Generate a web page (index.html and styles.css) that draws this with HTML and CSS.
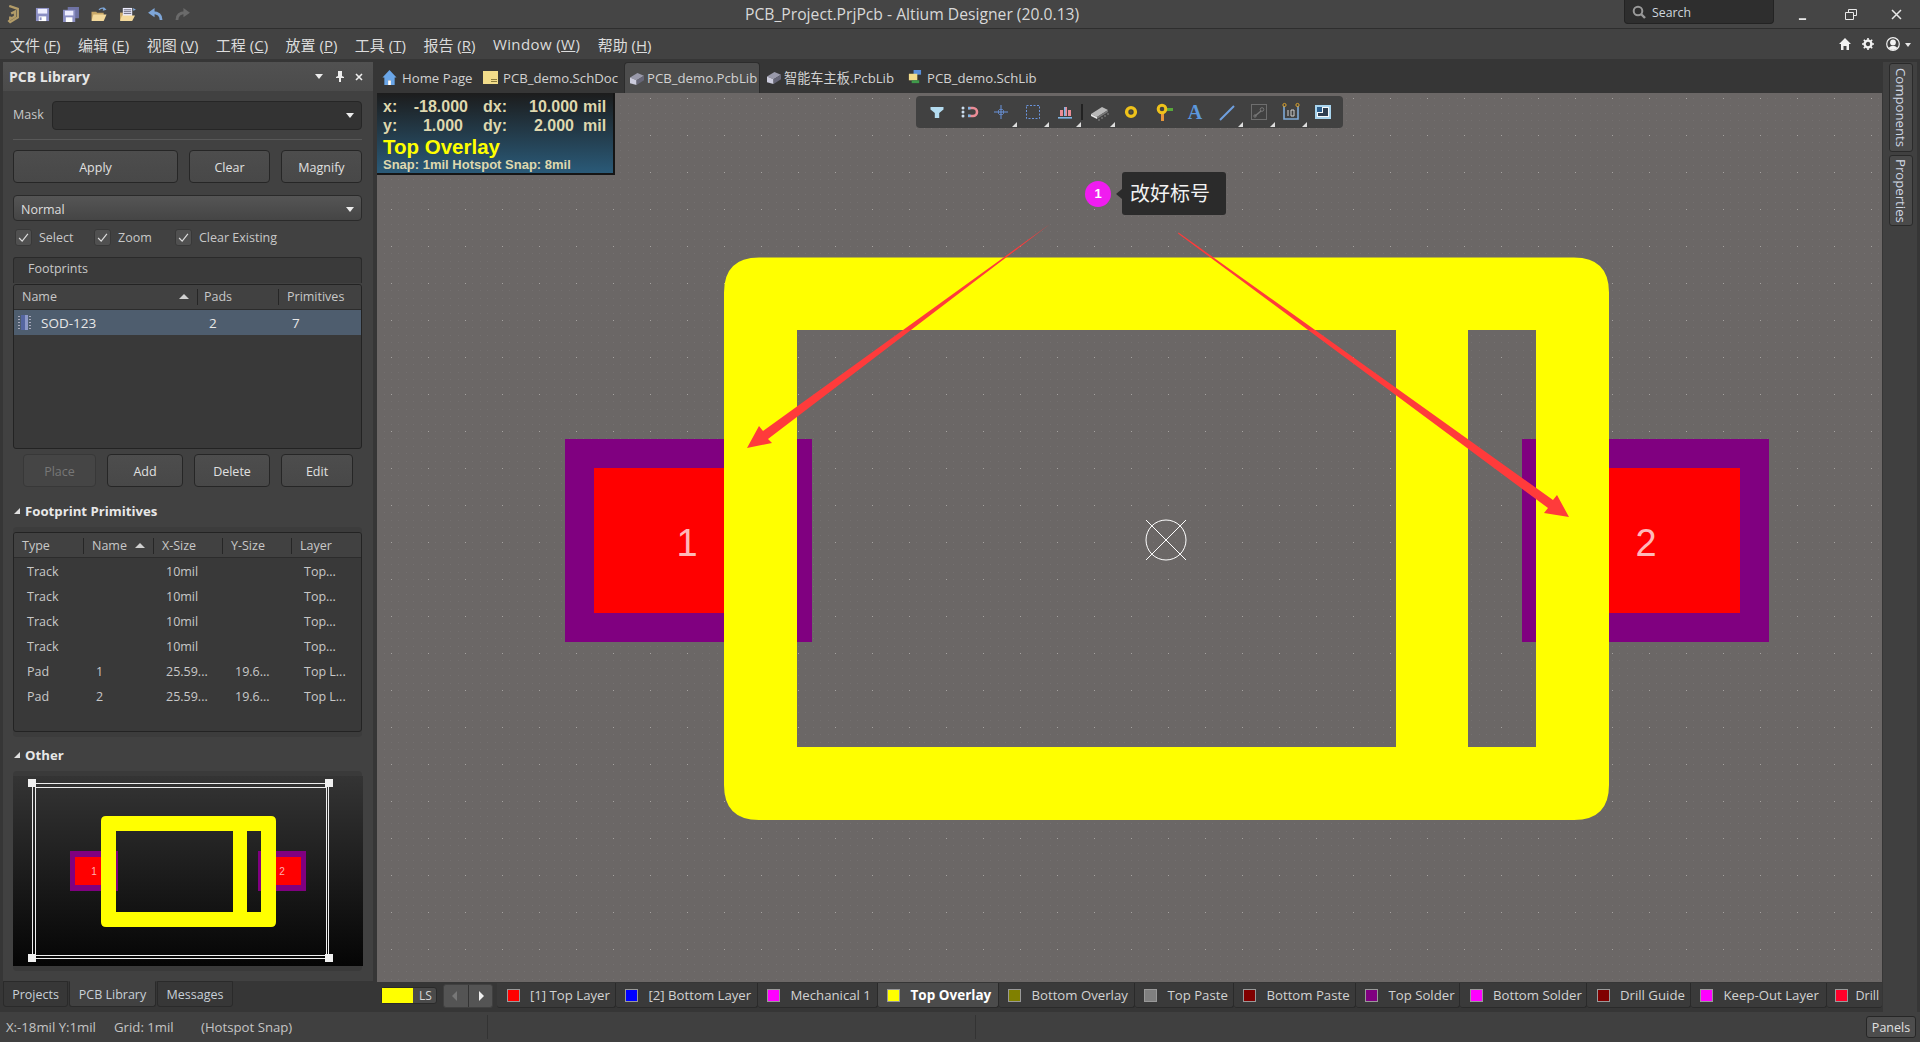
FILE: index.html
```html
<!DOCTYPE html>
<html lang="en">
<head>
<meta charset="utf-8">
<title>PCB_Project.PrjPcb - Altium Designer (20.0.13)</title>
<link rel="stylesheet" href="styles.css">
</head>
<body>
<div class="app">
  <header class="titlebar">
    <div class="quick">
      <svg class="logo" viewBox="0 0 14 20"><path d="M2 1l9 3v9l-8 5-2-2M4 9l4-2v5l-5 3v-3" fill="none" stroke="#b39c68" stroke-width="2.4"/></svg>
      <svg class="qi qi-save" viewBox="0 0 16 16"><path d="M1 1h14v14H1z" fill="#8b8fc4"/><path d="M3 2h10v5H3z" fill="#eef"/><path d="M4 10h8v5H4z" fill="#fff"/><path d="M5 11h2v3H5z" fill="#8b8fc4"/></svg>
      <svg class="qi qi-saveall" viewBox="0 0 17 16"><path d="M5 0h12v12H5z" fill="#6f73a4"/><path d="M0 3h13v13H0z" fill="#8b8fc4"/><path d="M2 4h9v5H2z" fill="#eef"/><path d="M3 11h7v5H3z" fill="#fff"/></svg>
      <svg class="qi qi-open" viewBox="0 0 18 16"><path d="M1 5h5l1 1h7v8H1z" fill="#c9a868"/><path d="M3 8h14l-3 7H1z" fill="#f3d99c"/><path d="M9 3Q12 0 15 2" fill="none" stroke="#7ea6d8" stroke-width="1.4"/><path d="M14 0l3 3-4 1z" fill="#7ea6d8"/></svg>
      <svg class="qi qi-opendoc" viewBox="0 0 18 16"><path d="M1 6h5v8H1z" fill="#c9a868"/><path d="M4 1h10v10H4z" fill="#eef"/><path d="M5 3h8M5 5h8M5 7h8" stroke="#667" stroke-width="1"/><path d="M3 9h14l-3 6H1z" fill="#f3d99c"/><path d="M15 1l3 2-3 1z" fill="#7ea6d8"/></svg>
      <svg class="qi qi-undo" viewBox="0 0 16 14"><path d="M14 13Q14 5 5 5" fill="none" stroke="#7ea6d8" stroke-width="3"/><path d="M7 0v10L0 5z" fill="#7ea6d8"/></svg>
      <svg class="qi qi-redo" viewBox="0 0 16 14"><path d="M2 13Q2 5 11 5" fill="none" stroke="#6a6a6a" stroke-width="3"/><path d="M9 0v10l7-5z" fill="#6a6a6a"/></svg>
    </div>
    <div class="apptitle">PCB_Project.PrjPcb - Altium Designer (20.0.13)</div>
    <div class="winside">
      <div class="search">
        <svg class="search-ic" viewBox="0 0 14 14"><circle cx="6" cy="6" r="4.3" fill="none" stroke="#999" stroke-width="2"/><path d="M9 9l4 4" stroke="#999" stroke-width="2.4"/></svg>
        <span>Search</span>
      </div>
      <svg class="win win-min" viewBox="0 0 10 10"><path d="M1 8h8v2H1z" fill="#e8e8e8"/></svg>
      <svg class="win win-max" viewBox="0 0 12 11"><path d="M3.5 3V.5h8v6H9M.5 3.5h8v7h-8z" fill="none" stroke="#e8e8e8"/></svg>
      <svg class="win win-close" viewBox="0 0 11 11"><path d="M1 1l9 9M10 1l-9 9" stroke="#e8e8e8" stroke-width="1.5"/></svg>
    </div>
  </header>

  <nav class="menubar">
    <div class="menus">
      <span>文件 (<u>F</u>)</span><span>编辑 (<u>E</u>)</span><span>视图 (<u>V</u>)</span><span>工程 (<u>C</u>)</span><span>放置 (<u>P</u>)</span><span>工具 (<u>T</u>)</span><span>报告 (<u>R</u>)</span><span class="menu-win">Window (<u>W</u>)</span><span>帮助 (<u>H</u>)</span>
    </div>
    <div class="menu-right">
      <svg class="mr-ic" viewBox="0 0 12 12"><path d="M6 0l6 6h-2v6H7.5V8h-3v4H2V6H0z" fill="#f2f2f2"/></svg>
      <svg class="mr-ic" viewBox="0 0 12 12"><circle cx="6" cy="6" r="3.4" fill="none" stroke="#f2f2f2" stroke-width="2.4"/><path d="M6 0v12M0 6h12M1.8 1.8l8.4 8.4M10.2 1.8l-8.4 8.4" stroke="#f2f2f2" stroke-width="1.6" stroke-dasharray="2 8"/></svg>
      <svg class="mr-user" viewBox="0 0 14 14"><circle cx="7" cy="7" r="6.3" fill="none" stroke="#f2f2f2" stroke-width="1.2"/><circle cx="7" cy="5.4" r="2.9" fill="#f2f2f2"/><path d="M2.4 11Q7 6.5 11.6 11Q7 15 2.4 11z" fill="#f2f2f2"/></svg>
      <i class="caret"></i>
    </div>
  </nav>

  <main class="workspace">
    <div class="leftcol">
      <section class="panel">
        <div class="panel-head">
          <b>PCB Library</b>
          <div class="panel-tools">
            <i class="tri-down"></i>
            <svg class="pin" viewBox="0 0 8 11"><path d="M2 0h4v5l2 1v1H5v4H3V7H0V6l2-1z" fill="#eee"/></svg>
            <svg class="xmark" viewBox="0 0 8 8"><path d="M1 1l6 6M7 1L1 7" stroke="#eee" stroke-width="1.6"/></svg>
          </div>
        </div>
        <div class="panel-body">
          <div class="mask-row">
            <label>Mask</label>
            <div class="input"><i class="tri-down"></i></div>
          </div>
          <div class="rule"></div>
          <div class="btns-top">
            <button class="btn">Apply</button><button class="btn">Clear</button><button class="btn">Magnify</button>
          </div>
          <div class="select"><span>Normal</span><i class="tri-down"></i></div>
          <div class="checks">
            <div class="check"><span class="box"><svg viewBox="0 0 10 10"><path d="M1 5.500l2.800 2.800 5.200-6.500" fill="none" stroke="#ddd" stroke-width="1.1"/></svg></span>Select</div>
            <div class="check"><span class="box"><svg viewBox="0 0 10 10"><path d="M1 5.500l2.800 2.800 5.200-6.500" fill="none" stroke="#ddd" stroke-width="1.1"/></svg></span>Zoom</div>
            <div class="check"><span class="box"><svg viewBox="0 0 10 10"><path d="M1 5.500l2.800 2.800 5.200-6.500" fill="none" stroke="#ddd" stroke-width="1.1"/></svg></span>Clear Existing</div>
          </div>
          <div class="fp-title">Footprints</div>
          <div class="table fp-table">
            <div class="thead fp-cols">
              <span class="th has-sort">Name<i class="tri-up"></i></span><span class="th th-pads">Pads</span><span class="th th-prim">Primitives</span>
            </div>
            <div class="tr-sel fp-cols">
              <span class="fp-name">
                <svg class="fp-ic" viewBox="0 0 15 15"><path d="M1 1h2v1H1zM1 4h2v1H1zM1 7h2v1H1zM1 10h2v1H1zM1 13h2v1H1zM12 1h2v1h-2zM12 4h2v1h-2zM12 7h2v1h-2zM12 10h2v1h-2zM12 13h2v1h-2z" fill="#aab"/><path d="M4 0h7v15H4z" fill="#5566a0"/><path d="M8 0h3v15H8z" fill="#8d99c8"/></svg>SOD-123</span><span class="td-pads">2</span><span class="td-prim">7</span>
            </div>
          </div>
          <div class="btns-mid">
            <button class="btn btn-off">Place</button><button class="btn">Add</button><button class="btn">Delete</button><button class="btn">Edit</button>
          </div>
          <h3 class="sect"><i class="tri-corner"></i>Footprint Primitives</h3>
          <div class="group">
            <div class="table prim-table">
              <div class="thead prim-cols">
                <span class="th">Type</span><span class="th has-sort">Name<i class="tri-up"></i></span><span class="th">X-Size</span><span class="th">Y-Size</span><span class="th">Layer</span>
              </div>
              <div class="tr prim-cols"><span>Track</span><span></span><span>10mil</span><span></span><span>Top...</span></div>
              <div class="tr prim-cols"><span>Track</span><span></span><span>10mil</span><span></span><span>Top...</span></div>
              <div class="tr prim-cols"><span>Track</span><span></span><span>10mil</span><span></span><span>Top...</span></div>
              <div class="tr prim-cols"><span>Track</span><span></span><span>10mil</span><span></span><span>Top...</span></div>
              <div class="tr prim-cols"><span>Pad</span><span>1</span><span>25.59...</span><span>19.6...</span><span>Top L...</span></div>
              <div class="tr prim-cols"><span>Pad</span><span>2</span><span>25.59...</span><span>19.6...</span><span>Top L...</span></div>
            </div>
          </div>
          <h3 class="sect sect-other"><i class="tri-corner"></i>Other</h3>
          <div class="preview-wrap">
            <svg class="preview" viewBox="13 776 350 190">
              <path d="M70 851h48v40H70zM258 851h48v40h-48z" fill="#800080"/>
              <path d="M75 857h40v28H75zM261 857h40v28h-40z" fill="#f00"/>
              <text x="94" y="875" class="mini-num">1</text>
              <text x="282" y="875" class="mini-num">2</text>
              <path fill-rule="evenodd" d="M106 816h165q5 0 5 5v101q0 5-5 5H106q-5 0-5-5V821q0-5 5-5zM116 831v81h117v-81zM247 831v81h14v-81z" fill="#ff0"/>
              <path d="M32.500 783.500h296M35.500 787.500h291M32.500 958.500h296M35.500 955.500h291M32.500 783v176M35.500 787v168M328.500 783v176M326.500 787v168" stroke="#eee" fill="none"/>
              <path d="M28 779h8v8h-8zM325 779h8v8h-8zM28 954h8v8h-8zM325 954h8v8h-8z" fill="#f0f0f0"/>
            </svg>
          </div>
        </div>
      </section>
      <div class="panel-tabs">
        <span class="ptab">Projects</span><span class="ptab ptab-on">PCB Library</span><span class="ptab">Messages</span>
      </div>
    </div>

    <div class="centercol">
      <div class="doc-tabs">
        <div class="doc-tab doc-home">
          <svg class="doc-ic" viewBox="0 0 15 16"><path d="M7.500 0L0 8h2v8h4v-5h3v5h4V8h2z" fill="#6aa6e8"/><path d="M6 11h3v5H6z" fill="#fff"/></svg>Home Page</div>
        <div class="doc-tab doc-sch">
          <svg class="doc-ic" viewBox="0 0 15 13"><path d="M0 0h15v13H0z" fill="#f2dc8a"/><path d="M8 8h6v1H8zM8 10h6v1H8z" fill="#8a7a3a"/></svg>PCB_demo.SchDoc</div>
        <div class="doc-tab doc-pcb doc-on">
          <svg class="doc-ic doc-ic-pcb" viewBox="0 0 15 14"><path d="M0 6l8-5 7 3-8 5z" fill="#99a"/><path d="M0 6v6l7 2V9z" fill="#ccd"/><path d="M7 9v5l8-5V4z" fill="#667"/></svg>PCB_demo.PcbLib</div>
        <div class="doc-tab doc-cn">
          <svg class="doc-ic doc-ic-pcb" viewBox="0 0 15 14"><path d="M0 6l8-5 7 3-8 5z" fill="#99a"/><path d="M0 6v6l7 2V9z" fill="#ccd"/><path d="M7 9v5l8-5V4z" fill="#667"/></svg>智能车主板.PcbLib</div>
        <div class="doc-tab doc-lib">
          <svg class="doc-ic" viewBox="0 0 14 16"><path d="M6 0h8v5H6z" fill="#5a8fd8"/><path d="M1 4h9v7H1z" fill="#f3dc8a"/><path d="M4 11h8v3H4z" fill="#3f9a4a"/></svg>PCB_demo.SchLib</div>
      </div>

      <div class="canvas">
        <svg class="board" viewBox="377 93 1505 889">
          <defs>
            <pattern id="grid" x="724" y="98" width="37" height="37" patternUnits="userSpaceOnUse">
              <path d="M7 0h1v1H7zM15 0h1v1h-1zM22 0h1v1h-1zM30 0h1v1h-1zM0 7h1v1H0zM7 7h1v1H7zM15 7h1v1h-1zM22 7h1v1h-1zM30 7h1v1h-1zM0 15h1v1H0zM7 15h1v1H7zM15 15h1v1h-1zM22 15h1v1h-1zM30 15h1v1h-1zM0 22h1v1H0zM7 22h1v1H7zM15 22h1v1h-1zM22 22h1v1h-1zM30 22h1v1h-1zM0 30h1v1H0zM7 30h1v1H7zM15 30h1v1h-1zM22 30h1v1h-1zM30 30h1v1h-1z" fill="#747070"/>
              <path d="M0 0h1v1H0z" fill="#a5a2a0"/>
            </pattern>
          </defs>
          <rect x="377" y="93" width="1505" height="889" fill="#6b6766"/>
          <rect x="377" y="93" width="1505" height="889" fill="url(#grid)"/>
          <path d="M565 439h247v203H565zM1522 439h247v203h-247z" fill="#800080"/>
          <path d="M594 468h190v145H594zM1550 468h190v145h-190z" fill="#f00"/>
          <text x="687" y="556" class="pad-num">1</text>
          <text x="1646" y="556" class="pad-num">2</text>
          <path fill-rule="evenodd" d="M759 257.500h815q35 0 35 35v492.500q0 35-35 35H759q-35 0-35-35V292.500q0-35 35-35zM797 330v417h599V330zM1468 330v417h68V330z" fill="#ff0"/>
          <circle cx="1166" cy="540" r="20" fill="none" stroke="#fff" stroke-width="1"/>
          <path d="M1146 520l40 40M1186 520l-40 40" stroke="#fff" stroke-width="1"/>
          <path d="M1050 224L763 431 759 426 747 448 772 443 768 439z" fill="#ff3b3b"/>
          <path d="M1178.500 232.500L1553 500 1557 495 1569 517 1544 513 1548 508 1178 233.500z" fill="#ff3b3b"/>
        </svg>

        <div class="info">
          <div class="info-row"><span>x:</span><span class="val">-18.000</span><span></span><span>dx:</span><span class="val">10.000</span><span></span><span>mil</span></div>
          <div class="info-row"><span>y:</span><span class="val val-y">1.000</span><span></span><span>dy:</span><span class="val val-dy">2.000</span><span></span><span>mil</span></div>
          <div class="info-layer">Top Overlay</div>
          <div class="info-snap">Snap: 1mil Hotspot Snap: 8mil</div>
        </div>

        <div class="toolbar">
          <span class="tool"><svg class="tool-ic" viewBox="0 0 20 20"><path d="M3.500 5h13v2.500l-4.300 3.500v5H7.800v-5L3.500 7.500z" fill="#b4dcf0"/></svg></span>
          <span class="tool"><svg class="tool-ic" viewBox="0 0 20 20"><path d="M9 6h5a4 4 0 010 8H9" fill="none" stroke="#ec8c96" stroke-width="2.600"/><path d="M9 5h2.500v2.600H9zM9 12.400h2.500V15H9z" fill="#7eb4e4"/><circle cx="4" cy="6" r="1.500" fill="#cde"/><circle cx="4" cy="10" r="1.500" fill="#cde"/><circle cx="4" cy="14" r="1.500" fill="#cde"/></svg></span>
          <span class="tool has-tri"><svg class="tool-ic" viewBox="0 0 20 20"><path d="M10 3v14M3 10h14" stroke="#6a94dc" stroke-width="1"/><path d="M7.500 8v4M12.500 8v4M8 7.500h4M8 12.500h4" stroke="#6a94dc" stroke-width=".7"/></svg></span>
          <span class="tool has-tri"><svg class="tool-ic" viewBox="0 0 20 20"><rect x="3.500" y="3.500" width="13" height="13" fill="none" stroke="#6a94dc" stroke-dasharray="2 1.500"/></svg></span>
          <span class="tool has-tri"><svg class="tool-ic" viewBox="0 0 20 20"><path d="M5 8h3v6H5zM9 5h3v9H9zM13 8h3v6h-3z" fill="#ec8c96"/><path d="M9 5h1.500v9H9z" fill="#7eb4e4"/><path d="M3 15h14v1.600H3z" fill="#7eb4e4"/></svg></span>
          <span class="tool-sep"></span>
          <span class="tool has-tri"><svg class="tool-ic" viewBox="0 0 20 20"><path d="M2 12L13 5l6 3-11 7z" fill="#b8b8b8"/><path d="M2 12l6 3v2l-6-3z" fill="#e4e4e4"/><path d="M8 15l11-7v2L8 17z" fill="#777"/><path d="M10 17v2M13 15v2M16 13v2M19 11v2" stroke="#8a8a8a"/></svg></span>
          <span class="tool"><svg class="tool-ic" viewBox="0 0 20 20"><circle cx="10" cy="10" r="4.400" fill="none" stroke="#efc21a" stroke-width="3.400"/><circle cx="10" cy="10" r="1.400" fill="#55513a"/></svg></span>
          <span class="tool"><svg class="tool-ic" viewBox="0 0 20 20"><path d="M8 12h3v7H8z" fill="#e6953a"/><path d="M13 6h7v3h-7z" fill="#58a83a"/><circle cx="9" cy="7" r="3.800" fill="none" stroke="#efc21a" stroke-width="3"/></svg></span>
          <span class="tool"><span class="tool-a">A</span></span>
          <span class="tool has-tri"><svg class="tool-ic" viewBox="0 0 20 20"><path d="M3 18L17 4" stroke="#6fa0e0" stroke-width="2"/></svg></span>
          <span class="tool has-tri"><svg class="tool-ic" viewBox="0 0 20 20"><rect x="2.500" y="2.500" width="15" height="15" fill="none" stroke="#6e6e6e"/><path d="M6 14l6-5" stroke="#777" stroke-width="1.500"/><circle cx="13" cy="7.500" r="1.800" fill="none" stroke="#777"/><circle cx="6" cy="14" r="1.200" fill="none" stroke="#777"/></svg></span>
          <span class="tool has-tri"><svg class="tool-ic" viewBox="0 0 20 20"><path d="M3 4v13h14V4" fill="none" stroke="#7faad8" stroke-width="1.600"/><circle cx="3.500" cy="3" r="1.600" fill="none" stroke="#d9a02a"/><circle cx="16.500" cy="3" r="1.600" fill="none" stroke="#d9a02a"/><path d="M7 8v6M10 8h3v6h-3z" fill="none" stroke="#cfcfcf"/></svg></span>
          <span class="tool"><svg class="tool-ic" viewBox="0 0 20 20"><path d="M2 3h16v14H2z" fill="#a8d4ee"/><path d="M4 5h12v10H4z" fill="#2e5f8c"/><path d="M4 15V10h5V5h7v10z" fill="#ffffff" opacity=".95"/><path d="M10 6h5v8H5v-3h5z" fill="#2e3e50"/></svg></span>
        </div>

        <div class="callout">
          <span class="badge">1</span>
          <div class="tip">改好标号</div>
        </div>
      </div>

      <div class="layers">
        <div class="ls"><span class="ls-color"></span><span>LS</span></div>
        <div class="nav"><i class="nav-l"></i><i class="nav-r"></i></div>
        <div class="layer-tabs">
          <span class="lt"><i class="sw sw-red"></i>[1] Top Layer</span>
          <span class="lt"><i class="sw sw-blue"></i>[2] Bottom Layer</span>
          <span class="lt"><i class="sw sw-mag"></i>Mechanical 1</span>
          <span class="lt lt-on"><i class="sw sw-yel"></i>Top Overlay</span>
          <span class="lt"><i class="sw sw-oli"></i>Bottom Overlay</span>
          <span class="lt"><i class="sw sw-gry"></i>Top Paste</span>
          <span class="lt"><i class="sw sw-mar"></i>Bottom Paste</span>
          <span class="lt"><i class="sw sw-pur"></i>Top Solder</span>
          <span class="lt"><i class="sw sw-mag"></i>Bottom Solder</span>
          <span class="lt"><i class="sw sw-mar"></i>Drill Guide</span>
          <span class="lt"><i class="sw sw-mag"></i>Keep-Out Layer</span>
          <span class="lt lt-drill"><i class="sw sw-drl"></i>Drill</span>
        </div>
      </div>
    </div>

    <aside class="rightstrip">
      <span class="vtab vtab-comp">Components</span>
      <span class="vtab vtab-prop">Properties</span>
    </aside>
  </main>

  <footer class="status">
    <div class="st st-a"><span class="st-xy">X:-18mil Y:1mil</span><span class="st-grid">Grid: 1mil</span><span>(Hotspot Snap)</span></div>
    <div class="st st-b"></div>
    <div class="st st-c"><button class="panels">Panels</button></div>
  </footer>
</div>
</body>
</html>
```

FILE: styles.css
```css
* { box-sizing: border-box; }
html, body { margin: 0; height: 100%; overflow: hidden; }
body {
  font-family: "Open Sans", "Noto Sans CJK SC", sans-serif;
  font-size: 12.5px;
  color: #d4d4d4;
  background: #363636;
}
i { display: block; }
.app { display: flex; flex-direction: column; height: 1042px; width: 1920px; }

/* title bar */
.titlebar {
  flex: 0 0 29px;
  display: grid;
  grid-template-columns: 745px 335px 1fr;
  align-items: center;
  background: #454545;
  border-bottom: 1px solid #2e2e2e;
}
.quick { display: flex; align-items: center; height: 28px; position: relative; }
.logo { width: 14px; height: 19px; margin-left: 7px; }
.qi { flex: none; }
.qi-save { width: 15px; height: 15px; margin-left: 14px; }
.qi-saveall { width: 16px; height: 15px; margin-left: 13px; }
.qi-open { width: 18px; height: 15px; margin-left: 11px; }
.qi-opendoc { width: 17px; height: 15px; margin-left: 11px; }
.qi-undo { width: 15px; height: 13px; margin-left: 12px; }
.qi-redo { width: 15px; height: 13px; margin-left: 12px; }
.apptitle { font-size: 15.7px; color: #d8d8d8; white-space: nowrap; }
.winside { display: flex; align-items: flex-start; height: 28px; padding-left: 544px; }
.search {
  width: 150px; height: 24px; display: flex; align-items: center; gap: 6px;
  padding: 1px 0 0 7px; background: #2e2e2e; border: 1px solid #232323; border-top: 0;
  border-radius: 0 0 4px 4px; font-size: 12.3px; color: #cfd6de;
}
.search-ic { width: 14px; height: 14px; }
.win { flex: none; }
.win-min { width: 9px; height: 9px; margin: 11px 0 0 24px; }
.win-max { width: 12px; height: 11px; margin: 9px 0 0 38px; }
.win-close { width: 11px; height: 11px; margin: 9px 0 0 34px; }

/* menu bar */
.menubar {
  flex: 0 0 30px; display: flex; align-items: center; justify-content: space-between;
  background: #424242; padding: 0 9px 0 10px;
}
.menus { display: flex; gap: 17.500px; font-size: 15px; color: #dcdcdc; white-space: nowrap; }
.menu-win { letter-spacing: .4px; }
.menu-right { display: flex; align-items: center; gap: 11px; }
.mr-ic { width: 12px; height: 12px; }
.mr-user { width: 14px; height: 14px; margin-left: 1px; margin-right: -6px; }
.caret { width: 0; height: 0; border: 3.5px solid transparent; border-top: 4px solid #e6e6e6; margin-top: 4px; }

/* workspace */
.workspace { flex: 0 0 953px; display: grid; grid-template-columns: 377px 1505px 38px; }
.leftcol { display: flex; flex-direction: column; padding: 3px 4px 0 3px; }
.panel { flex: 0 0 919px; background: #414141; }
.panel-head {
  height: 29px; display: flex; align-items: center; justify-content: space-between;
  padding: 0 10px 0 6px; background: linear-gradient(#515151, #4b4b4b); font-size: 14px; color: #e6e6e6;
}
.panel-tools { display: flex; align-items: center; gap: 13px; }
.pin { width: 8px; height: 11px; }
.xmark { width: 8px; height: 8px; margin-left: -2px; }
.tri-down { width: 0; height: 0; border: 4.5px solid transparent; border-top: 5px solid #ececec; border-bottom: 0; }
.panel-body { padding: 10px 11px 0 10px; }
.mask-row { display: flex; align-items: center; height: 29px; }
.mask-row label { width: 39px; padding-bottom: 2px; color: #c8c8c8; }
.input {
  flex: 1; height: 29px; display: flex; align-items: center; justify-content: flex-end;
  padding-right: 7px; background: #333; border: 1px solid #262626; border-radius: 4px;
}
.rule { height: 1px; margin-top: 9px; background: #585858; }
.btn {
  display: block; padding: 2px 0 0; font: inherit; color: #e0e0e0; text-align: center;
  background: linear-gradient(#4d4d4d, #484848); border: 1px solid #262626; border-radius: 4px;
}
.btns-top { display: grid; grid-template-columns: 165px 81px 81px; column-gap: 11px; margin-top: 10px; height: 33px; }
.select {
  margin-top: 12px; height: 26px; display: flex; align-items: center; justify-content: space-between;
  padding: 2px 7px 0 7px; background: linear-gradient(#555, #454545); border: 1px solid #2a2a2a; border-radius: 4px; color: #ddd;
}
.checks { display: grid; grid-template-columns: 79px 81px 1fr; margin: 8px 0 0 2px; height: 17px; }
.check { display: flex; align-items: center; gap: 7px; color: #c8c8c8; }
.box {
  width: 17px; height: 17px; display: flex; align-items: center; justify-content: center;
  background: #505050; border: 1px solid #383838; border-radius: 3px;
}
.box svg { width: 11px; height: 11px; }
.fp-title {
  margin-top: 11px; height: 26px; padding: 0 0 0 14px; line-height: 22px; background: #3a3a3a;
  border: 1px solid #2a2a2a; border-bottom: 0; border-radius: 3px 3px 0 0; color: #c8c8c8;
}
.table { background: #393939; border: 1px solid #232323; border-radius: 3px; overflow: hidden; }
.fp-table { margin-top: 1px; height: 165px; }
.thead { height: 25px; background: #414141; border-bottom: 1px solid #2c2c2c; color: #c8c8c8; display: grid; align-items: center; }
.th { position: relative; height: 16px; line-height: 15px; padding-left: 8px; border-left: 1px solid #262626; white-space: nowrap; }
.th:first-child { border-left: 0; }
.fp-cols { display: grid; grid-template-columns: 183px 81px 83px; }
.th-pads { padding-left: 6px; }
.th-prim { padding-left: 8px; }
.tri-up { position: absolute; right: 8px; top: 5px; width: 0; height: 0; border: 5px solid transparent; border-bottom: 5px solid #d0d0d0; border-top: 0; }
.tr-sel { height: 25px; background: #4e5d6e; align-items: center; color: #e8e8e8; }
.fp-name { display: flex; align-items: center; gap: 9px; padding-left: 3px; font-size: 13.5px; }
.fp-ic { width: 15px; height: 15px; }
.td-pads { padding-left: 12px; font-size: 13.5px; }
.td-prim { padding-left: 14px; font-size: 13.5px; }
.btns-mid { display: grid; grid-template-columns: 73px 76px 76px 72px; column-gap: 11px; margin: 5px 0 0 10px; height: 33px; }
.btn-off { background: #454545; border-color: #383838; color: #777; }
.sect { margin: 14px 0 0; height: 20px; display: flex; align-items: center; gap: 5px; font-size: 13.2px; font-weight: 700; color: #e8e8e8; }
.sect-other { margin-top: 8px; }
.tri-corner { width: 0; height: 0; margin-left: 1px; border-style: solid; border-width: 0 0 6px 6px; border-color: transparent transparent #e0e0e0 transparent; }
.group { margin-top: 6px; height: 210px; padding: 5px 0; background: #3c3c3c; border-radius: 4px; }
.prim-table { height: 200px; }
.prim-table .thead { padding-top: 1px; }
.prim-table .thead + .tr { margin-top: 1px; }
.prim-cols { display: grid; grid-template-columns: 69px 70px 69px 69px 70px; }
.tr { height: 25px; align-items: center; color: #c8c8c8; white-space: nowrap; }
.tr span { padding-left: 13px; }
.preview-wrap { margin-top: 6px; height: 200px; padding: 5px 0; background: #3a3a3a; border-radius: 4px; }
.preview { display: block; width: 350px; height: 190px; background: linear-gradient(#343434, #050505); }
.mini-num { font: 10px "Liberation Sans", sans-serif; fill: #ffb0b0; text-anchor: middle; }
.pad-num { font: 38px "Liberation Sans", sans-serif; fill: #ffb8b8; text-anchor: middle; }

.panel-tabs { flex: 0 0 26px; display: flex; gap: 1px; }
.ptab {
  display: flex; align-items: center; justify-content: center; height: 26px; color: #c8d0d8;
  background: #373737; border: 1px solid #2a2a2a; border-radius: 0 0 3px 3px;
}
.ptab:nth-child(1) { width: 65px; }
.ptab:nth-child(2) { width: 87px; border-top-color: #414141; background: #414141; }
.ptab:nth-child(3) { width: 76px; }

/* centre */
.centercol { display: flex; flex-direction: column; min-width: 0; font-size: 13.2px; }
.doc-tabs { flex: 0 0 34px; display: flex; align-items: flex-end; padding-top: 3px; }
.doc-tab { height: 27px; margin-bottom: 2px; display: flex; align-items: center; white-space: nowrap; color: #d2d2d2; }
.doc-ic { flex: none; width: 15px; height: 15px; margin-right: 5px; }
.doc-ic-pcb { width: 14px; margin-right: 3px; }
.doc-home { padding-left: 5px; width: 106px; }
.doc-sch { width: 141px; }
.doc-pcb { width: 136px; padding-left: 5px; height: 31px; margin-bottom: 0; margin-right: 7px; background: #4d4d4d; border: 1px solid #2c2c2c; border-bottom: 0; border-radius: 4px 4px 0 0; }
.doc-cn { width: 140px; }
.canvas { position: relative; flex: 0 0 889px; background: #6b6766; overflow: hidden; }
.board { display: block; width: 1505px; height: 889px; }
.info {
  position: absolute; left: 0; top: 0; width: 238px; height: 82px; padding: 5px 0 0 6px;
  background: linear-gradient(#1c1c1c, #2a5a78); border: 2px solid #151515; border-left: 0; border-top: 0;
  font-family: "Liberation Sans", sans-serif; font-weight: 700; color: #dfd8ae; white-space: nowrap;
}
.info-row { display: grid; grid-template-columns: 30px 55px 15px 45px 50px 5px auto; font-size: 16px; height: 18.500px; line-height: 18px; }
.val { text-align: right; }
.val-y { padding-right: 5px; }
.val-dy { padding-right: 4px; }
.info-layer { font-size: 20.500px; line-height: 23px; color: #ffff00; }
.info-snap { font-size: 13px; line-height: 14px; }
.toolbar {
  position: absolute; left: 539px; top: 3px; width: 427px; height: 32px; padding-left: 5px;
  display: flex; align-items: center; background: #414141; border-radius: 4px;
}
.tool { position: relative; flex: none; width: 32px; height: 32px; display: flex; align-items: center; justify-content: center; }
.tool-sep { flex: none; width: 2px; height: 16px; background: #222; margin: 0; }
.tool-ic { width: 20px; height: 20px; }
.has-tri::after {
  content: ""; position: absolute; right: 0; bottom: 1px; width: 0; height: 0;
  border-style: solid; border-width: 0 0 5px 5px; border-color: transparent transparent #ddd transparent;
}
.tool-a { font: 700 20px "Liberation Serif", serif; color: #5c98dc; }
.callout { position: absolute; left: 708px; top: 79px; display: flex; align-items: center; gap: 11px; }
.badge {
  width: 26px; height: 26px; border-radius: 50%; background: #f01cf0; color: #fff;
  font: 700 13px "Liberation Sans", sans-serif; display: flex; align-items: center; justify-content: center;
}
.tip {
  position: relative; width: 104px; height: 43px; line-height: 42px; padding-left: 8px; background: #2b2b2b;
  border-radius: 3px; color: #f2f2f2; font-size: 20px; font-family: "Noto Sans CJK SC", sans-serif;
}
.tip::before {
  content: ""; position: absolute; left: -6px; top: 17px; width: 0; height: 0;
  border-style: solid; border-width: 5px 6px 5px 0; border-color: transparent #2b2b2b transparent transparent;
}

/* layers */
.layers { flex: 0 0 30px; display: flex; align-items: flex-start; padding: 1px 0 0 4px; }
.ls {
  width: 56px; height: 17px; margin-top: 4px; display: flex; align-items: center; background: #4a4a4a;
  border: 1px solid #2a2a2a; border-radius: 3px; font-size: 12px; color: #d8d8d8;
}
.ls span:last-child { padding-left: 6px; }
.ls-color { width: 31px; height: 15px; background: #ff0; }
.nav {
  width: 50px; height: 24px; margin: 1px 0 0 6px; display: flex; background: #545454; border: 1px solid #404040; border-radius: 3px;
}
.nav-l, .nav-r { flex: 1; position: relative; }
.nav-l { border-right: 1px solid #333; }
.nav-l::after, .nav-r::after {
  content: ""; position: absolute; top: 6px; width: 0; height: 0; border-style: solid;
}
.nav-l::after { left: 8px; border-width: 5px 5px 5px 0; border-color: transparent #777 transparent transparent; }
.nav-r::after { left: 10px; border-width: 5px 0 5px 5px; border-color: transparent transparent transparent #f0f0f0; }
.layer-tabs {
  margin-left: 4px; height: 25px; flex: 1; display: grid; overflow: hidden;
  grid-template-columns: 118.5px 142px 120px 121px 136px 99px 122px 104.5px 127px 103.5px 136px 55px;
}
.lt {
  display: flex; align-items: center; gap: 10.500px; padding-left: 9.500px; white-space: nowrap; color: #d2d2d2;
  background: #3a3a3a; border-right: 1px solid #2a2a2a; border-bottom: 1px solid #2a2a2a; border-radius: 0 0 3px 3px;
}
.lt-on { background: #4b4b4b; color: #fff; font-weight: 700; font-size: 13.500px; }
.lt-drill { padding-left: 8px; gap: 8px; font-size: 12.5px; border-right: 0; }
.sw { flex: none; width: 13px; height: 13px; border: 1px solid #999; }
.sw-red { background: #f00; }
.sw-blue { background: #00f; }
.sw-mag { background: #f0f; }
.sw-yel { background: #ff0; }
.sw-oli { background: #808000; }
.sw-gry { background: #808080; }
.sw-mar { background: #800000; }
.sw-pur { background: #800080; }
.sw-drl { background: #ff002a; }

/* right strip */
.rightstrip { display: flex; flex-direction: column; align-items: flex-end; margin: 3px 3px 0 1px; padding: 1px 4px 0 0; background: #404040; gap: 3px; font-size: 13.2px; }
.vtab {
  writing-mode: vertical-rl; width: 24px; display: flex; align-items: center; justify-content: center;
  background: #4a4a4a; border: 1px solid #2a2a2a; border-radius: 3px; color: #d0d8e4;
}
.vtab-comp { height: 89px; }
.vtab-prop { height: 71px; }

/* status */
.status { flex: 0 0 30px; display: flex; background: #404040; color: #c4c4c4; font-size: 13.2px; }
.st { display: flex; align-items: center; height: 30px; }
.st-a { width: 487px; padding-left: 6px; position: relative; }
.st-xy { width: 108px; }
.st-grid { width: 87px; }
.st-b { width: 488px; border-left: 1px solid #333; height: 24px; margin-top: 3px; }
.st-c { flex: 1; border-left: 1px solid #333; height: 24px; margin-top: 3px; justify-content: flex-end; padding-right: 4px; }
.panels {
  width: 50px; height: 22px; padding: 0; font: inherit; font-size: 12.5px; color: #e0e0e0; background: #4d4d4d;
  border: 1px solid #262626; border-radius: 3px;
}
```
